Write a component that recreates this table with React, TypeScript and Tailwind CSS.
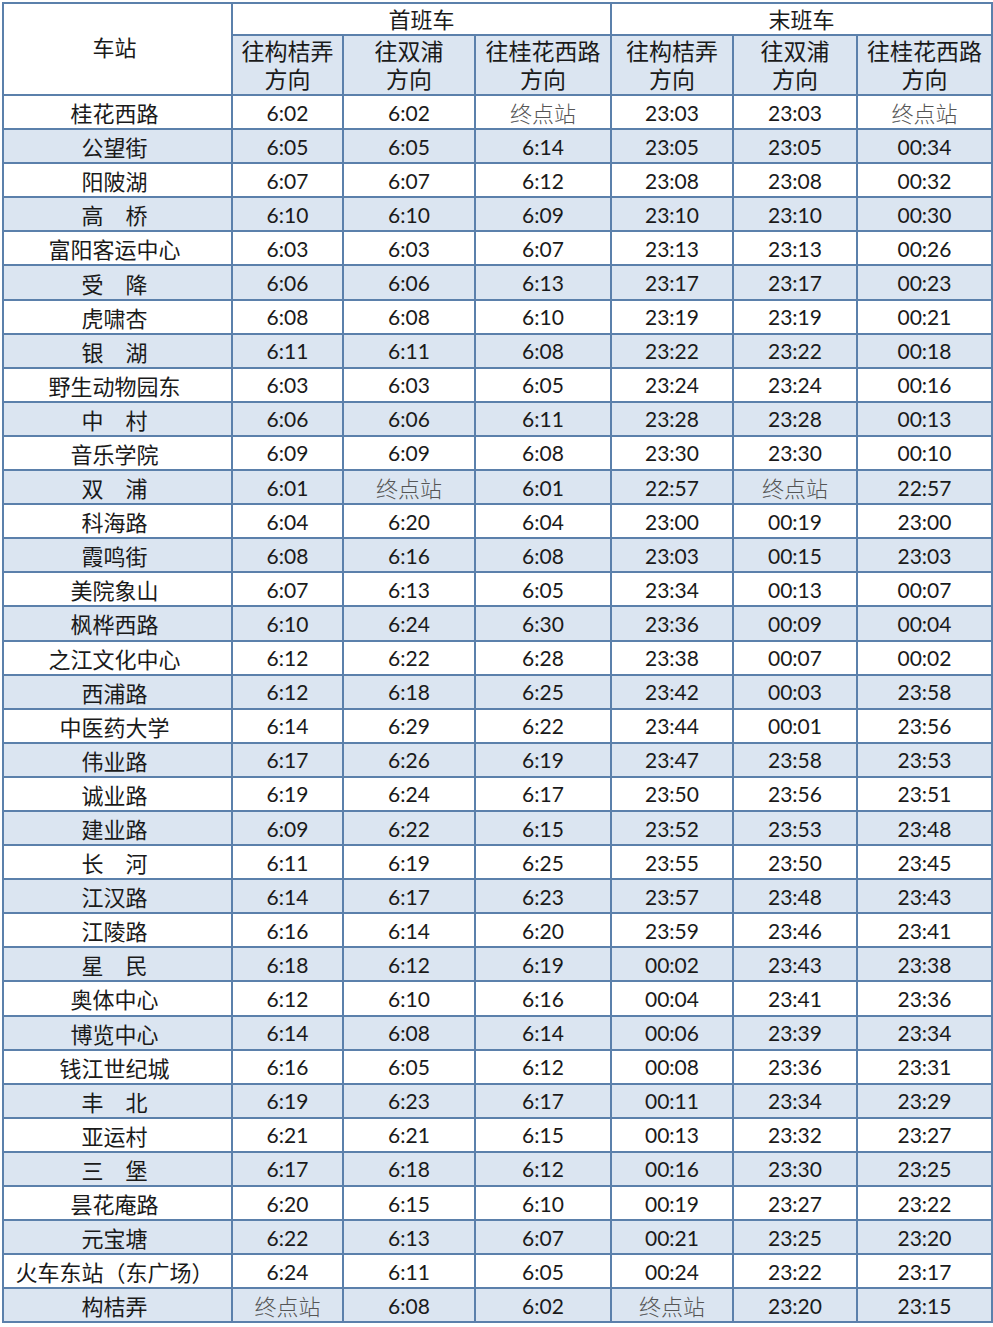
import React from 'react';

const S = '\u3000';
const END = '终点站';

const rows: string[][] = [
  ['桂花西路', '6:02', '6:02', END, '23:03', '23:03', END],
  ['公望街', '6:05', '6:05', '6:14', '23:05', '23:05', '00:34'],
  ['阳陂湖', '6:07', '6:07', '6:12', '23:08', '23:08', '00:32'],
  [`高${S}桥`, '6:10', '6:10', '6:09', '23:10', '23:10', '00:30'],
  ['富阳客运中心', '6:03', '6:03', '6:07', '23:13', '23:13', '00:26'],
  [`受${S}降`, '6:06', '6:06', '6:13', '23:17', '23:17', '00:23'],
  ['虎啸杏', '6:08', '6:08', '6:10', '23:19', '23:19', '00:21'],
  [`银${S}湖`, '6:11', '6:11', '6:08', '23:22', '23:22', '00:18'],
  ['野生动物园东', '6:03', '6:03', '6:05', '23:24', '23:24', '00:16'],
  [`中${S}村`, '6:06', '6:06', '6:11', '23:28', '23:28', '00:13'],
  ['音乐学院', '6:09', '6:09', '6:08', '23:30', '23:30', '00:10'],
  [`双${S}浦`, '6:01', END, '6:01', '22:57', END, '22:57'],
  ['科海路', '6:04', '6:20', '6:04', '23:00', '00:19', '23:00'],
  ['霞鸣街', '6:08', '6:16', '6:08', '23:03', '00:15', '23:03'],
  ['美院象山', '6:07', '6:13', '6:05', '23:34', '00:13', '00:07'],
  ['枫桦西路', '6:10', '6:24', '6:30', '23:36', '00:09', '00:04'],
  ['之江文化中心', '6:12', '6:22', '6:28', '23:38', '00:07', '00:02'],
  ['西浦路', '6:12', '6:18', '6:25', '23:42', '00:03', '23:58'],
  ['中医药大学', '6:14', '6:29', '6:22', '23:44', '00:01', '23:56'],
  ['伟业路', '6:17', '6:26', '6:19', '23:47', '23:58', '23:53'],
  ['诚业路', '6:19', '6:24', '6:17', '23:50', '23:56', '23:51'],
  ['建业路', '6:09', '6:22', '6:15', '23:52', '23:53', '23:48'],
  [`长${S}河`, '6:11', '6:19', '6:25', '23:55', '23:50', '23:45'],
  ['江汉路', '6:14', '6:17', '6:23', '23:57', '23:48', '23:43'],
  ['江陵路', '6:16', '6:14', '6:20', '23:59', '23:46', '23:41'],
  [`星${S}民`, '6:18', '6:12', '6:19', '00:02', '23:43', '23:38'],
  ['奥体中心', '6:12', '6:10', '6:16', '00:04', '23:41', '23:36'],
  ['博览中心', '6:14', '6:08', '6:14', '00:06', '23:39', '23:34'],
  ['钱江世纪城', '6:16', '6:05', '6:12', '00:08', '23:36', '23:31'],
  [`丰${S}北`, '6:19', '6:23', '6:17', '00:11', '23:34', '23:29'],
  ['亚运村', '6:21', '6:21', '6:15', '00:13', '23:32', '23:27'],
  [`三${S}堡`, '6:17', '6:18', '6:12', '00:16', '23:30', '23:25'],
  ['昙花庵路', '6:20', '6:15', '6:10', '00:19', '23:27', '23:22'],
  ['元宝塘', '6:22', '6:13', '6:07', '00:21', '23:25', '23:20'],
  ['火车东站（东广场）', '6:24', '6:11', '6:05', '00:24', '23:22', '23:17'],
  ['构桔弄', END, '6:08', '6:02', END, '23:20', '23:15'],
];

const dirs = ['往构桔弄', '往双浦', '往桂花西路'];

const cjk = "font-['Noto_Sans_CJK_SC',sans-serif]";
const num = "font-['Lato','Noto_Sans_CJK_SC',sans-serif]";
const cell = 'border-2 border-[#5b80ab] text-center p-0 leading-none';

export default function App() {
  return (
    <div className="bg-white w-[993px] h-[1327px] pt-[2px] pl-[2px] overflow-hidden">
      <table className="table-fixed border-collapse w-[989px] text-[#1a1a1a]">
        <colgroup>
          <col className="w-[229px]" />
          <col className="w-[111px]" />
          <col className="w-[132px]" />
          <col className="w-[136px]" />
          <col className="w-[122px]" />
          <col className="w-[124px]" />
          <col className="w-[135px]" />
        </colgroup>
        <thead>
          <tr className="h-[32px]">
            <th rowSpan={2} className={`${cell} ${cjk} bg-white text-[22px] font-normal pb-[6px] pr-[6px]`}>车站</th>
            <th colSpan={3} className={`${cell} ${cjk} bg-white text-[22px] font-normal pb-[3px]`}>首班车</th>
            <th colSpan={3} className={`${cell} ${cjk} bg-white text-[22px] font-normal pb-[3px]`}>末班车</th>
          </tr>
          <tr className="h-[59px]">
            {[...dirs, ...dirs].map((d, i) => (
              <th key={i} className={`${cell} ${cjk} bg-[#dbe5f1] text-[23px] font-normal pb-[2px]`}>
                <div className="leading-[28px]">{d}</div>
                <div className="leading-[28px]">方向</div>
              </th>
            ))}
          </tr>
        </thead>
        <tbody>
          {rows.map((r, i) => (
            <tr key={i} className={`h-[34.1px] ${i % 2 === 1 ? 'bg-[#dbe5f1]' : 'bg-white'}`}>
              {r.map((v, j) =>
                v === END ? (
                  <td key={j} className={`${cell} ${cjk} text-[22px] font-light text-[#555]`}>{v}</td>
                ) : j === 0 ? (
                  <td key={j} className={`${cell} ${cjk} text-[22px] whitespace-nowrap pr-[6px]`}>{v}</td>
                ) : (
                  <td key={j} className={`${cell} ${num} text-[21px]`}>{v}</td>
                )
              )}
            </tr>
          ))}
        </tbody>
      </table>
    </div>
  );
}
